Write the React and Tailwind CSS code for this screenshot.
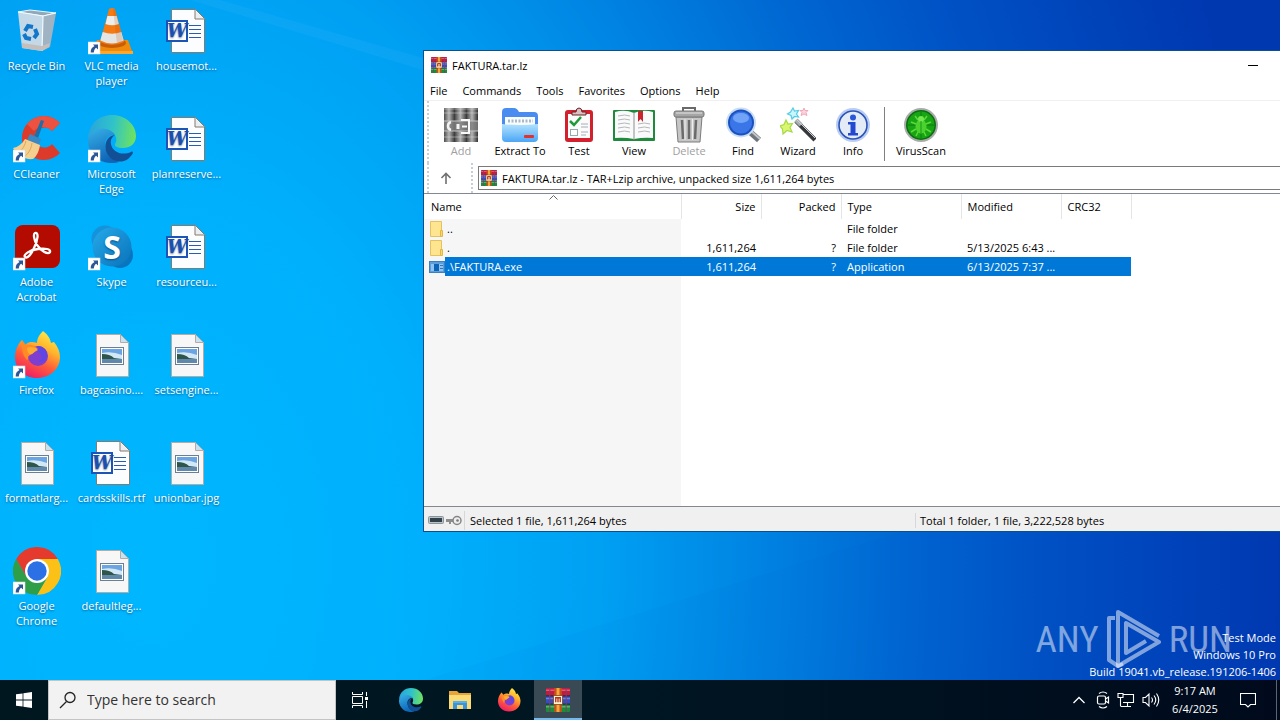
import { useState } from 'react'

/* ---------- desktop icons (48x48) ---------- */

function ShortcutArrow() {
  return (
    <g>
      <rect x="0" y="35" width="12" height="12" fill="#fff" stroke="#d5dbe2" strokeWidth="0.6" />
      <path d="M5 37.5h5v5l-1.8-1.7c-1.6 1-2.2 2.6-2.4 4.7H2.7c0-3 1-5 3.8-6.4z" fill="#2b5797" />
    </g>
  )
}

function RecycleBin() {
  return (
    <svg viewBox="0 0 48 48" className="size-12" aria-hidden="true">
      <path d="M5 5l12-2 26 3-13 3z" fill="#8fa9ba" stroke="#eef6fb" />
      <path d="M5 5l25 4-1 35-20-3z" fill="#c3d9e8" />
      <path d="M30 9l13-3-6 34-8 4z" fill="#9fb3c3" />
      <path d="M5 5l25 4 13-3M30 9l-1 35" fill="none" stroke="#f4fafd" strokeWidth="1.2" />
      <path d="M9 36l20 3 8-3-1 4-7 4-20-3z" fill="#c4bfbd" />
      <g fill="none" stroke="#1377c9" strokeWidth="4">
        <path d="M12 24l3-5 5 1" />
        <path d="M22 22l2 5-3 4" />
        <path d="M18 32l-5-1-2-4" />
      </g>
    </svg>
  )
}

function Vlc() {
  return (
    <svg viewBox="0 0 48 48" className="size-12" aria-hidden="true">
      <path d="M9 33h31l5 14H4z" fill="#f08a0c" />
      <path d="M4 44h41v3H4z" fill="#ffa62b" />
      <ellipse cx="24" cy="36" rx="14" ry="5" fill="#c95d05" />
      <path d="M21 2q3-2 6 0l9 33q-12 6-24 0z" fill="#f47b14" />
      <path d="M19.4 9h9.2l2.2 8q-6.500 2.500-13.300 0z" fill="#eceeed" />
      <path d="M14.700 25q9.500 3.500 18.600 0l2.400 8.500q-12 6-23.400 0z" fill="#e3e5e4" />
      <path d="M27 2l8 31-6 4-4-35z" fill="#b84a00" opacity=".18" />
      <ShortcutArrow />
    </svg>
  )
}

function CCleaner() {
  return (
    <svg viewBox="0 0 48 48" className="size-12" aria-hidden="true">
      <path d="M47 8A22 22 0 1 0 47 38l-8-9a10 10 0 1 1 0-13z" fill="#dc3b2b" />
      <path d="M47 8A22 22 0 0 0 14 9l7 7a12 12 0 0 1 18 0z" fill="#ed5240" />
      <path d="M28 5l3 1-7 20-4-2z" fill="#1d6fa5" />
      <path d="M17 19l11 5-2 6-12-5z" fill="#3a89c4" />
      <path d="M12 24l15 6c-1 6-3 11-7 14C12 45 4 40 0 33c5-1 9-4 12-9z" fill="#f5cf8f" />
      <path d="M13 26c-2 7-5 10-8 12M19 28c-1 7-4 11-8 14" stroke="#dba75b" fill="none" />
      <ShortcutArrow />
    </svg>
  )
}

function EdgeLogo({ id, className, children }) {
  return (
    <svg viewBox="0 0 48 48" className={className} aria-hidden="true">
      <defs>
        <linearGradient id={`${id}-top`} x1="0" y1=".4" x2="1" y2=".5">
          <stop offset="0" stopColor="#2aa4dc" />
          <stop offset=".5" stopColor="#2fc3c9" />
          <stop offset="1" stopColor="#6fe25e" />
        </linearGradient>
        <linearGradient id={`${id}-left`} x1="0" y1="0" x2=".4" y2="1">
          <stop offset="0" stopColor="#37b2e8" />
          <stop offset="1" stopColor="#0f66b8" />
        </linearGradient>
      </defs>
      <path d="M0 23C1 9 11 0 24 0c14 0 24 10 24 21 0 8-6 12-13 12-6 0-9-2-8-4 3-4 1-12-7-13C10 15 3 18 0 23z" fill={`url(#${id}-top)`} />
      <path d="M0 24c2-7 9-12 18-10 5 1 8 4 9 6-6-1-10 4-10 10 0 9 7 15 14 17C13 52-1 39 0 24z" fill={`url(#${id}-left)`} />
      <path d="M27 20c-8 1-11 9-9 16 3 9 13 14 22 8 2-2 4-4 5-6 0-1-1-2-2-1-9 4-19 0-20-8-1-4 1-7 4-9z" fill="#124f94" />
      {children}
    </svg>
  )
}

function Acrobat() {
  return (
    <svg viewBox="0 0 48 48" className="size-12" aria-hidden="true">
      <rect x="2" y="2" width="45" height="43" rx="8" fill="#b30b00" />
      <path d="M22 10c4-1 3 7-1 15-3 7-7 11-9 9s4-7 13-8c7-1 13 0 12 3-2 3-9-1-13-7-3-5-4-11-2-12z" fill="none" stroke="#fff" strokeWidth="2.300" />
      <ShortcutArrow />
    </svg>
  )
}

function Skype() {
  return (
    <svg viewBox="0 0 48 48" className="size-12" aria-hidden="true">
      <defs>
        <linearGradient id="sky" x1="0" y1="0" x2="1" y2="1">
          <stop offset="0" stopColor="#25aaea" />
          <stop offset="1" stopColor="#0a72bb" />
        </linearGradient>
      </defs>
      <circle cx="17" cy="16" r="13.500" fill="#1593da" />
      <circle cx="32" cy="32" r="13" fill="#0876bf" />
      <circle cx="24" cy="24" r="19.500" fill="url(#sky)" />
      <text x="24" y="36" textAnchor="middle" fontSize="32" fontWeight="700" fill="#fff" className="font-['Open_Sans',sans-serif]">S</text>
      <ShortcutArrow />
    </svg>
  )
}

function FirefoxLogo({ id, className, children }) {
  return (
    <svg viewBox="0 0 48 48" className={className} aria-hidden="true">
      <defs>
        <linearGradient id={`${id}-body`} x1=".8" y1="0" x2=".3" y2="1">
          <stop offset="0" stopColor="#fff04a" />
          <stop offset=".35" stopColor="#ffb32c" />
          <stop offset=".65" stopColor="#ff5b3a" />
          <stop offset="1" stopColor="#ee1c68" />
        </linearGradient>
      </defs>
      <path d="M30 0c5 4 7 7 8 12 2-1 3-1 3-1 4 5 6 10 6 15 0 12-10 21-23 21S2 38 2 26c0-7 3-13 7-17l3 5c2-2 4-3 6-3 2 0 4 0 6 1 0-5 3-9 6-12z" fill={`url(#${id}-body)`} />
      <circle cx="25" cy="25" r="10" fill="#7e3fd1" />
      <path d="M25 15c6 0 10 5 9 11-2 4-5 5-9 5 4-2 5-6 2-9-2-2-4-2-6-4z" fill="#5e46e4" />
      <path d="M9 9l4 5c4-1 9 0 12 4-3 0-4 2-5 4-2 2-5 2-5 5 0 2-1 2-1 2-3-3-6-8-5-20z" fill="#ff8a26" />
      <path d="M14 17c3-2 8-1 11 2-3 1-4 3-6 4-3 1-5-2-5-6z" fill="#ffab30" />
      {children}
    </svg>
  )
}

function ChromeLogo() {
  return (
    <svg viewBox="0 0 48 48" className="size-12" aria-hidden="true">
      <path d="M24 12h20.800A24 24 0 0 1 24 48l10.400-18z" fill="#fbc116" />
      <path d="M3.200 12l10.400 18 10.400 6 10.400-6L24 48A24 24 0 0 1 3.200 12z" fill="#2f9e49" />
      <path d="M3.200 12A24 24 0 0 1 44.800 12H24L13.600 30z" fill="#e53a2e" />
      <circle cx="24" cy="24" r="12" fill="#fff" />
      <circle cx="24" cy="24" r="9.700" fill="#2b70e4" />
      <ShortcutArrow />
    </svg>
  )
}

function WordDoc() {
  return (
    <svg viewBox="0 0 48 48" className="size-12" aria-hidden="true">
      <path d="M8.500 2.500h24l9 9v34h-33z" fill="#fcfdfe" stroke="#87796c" />
      <path d="M32 3v9h9" fill="#e9eef2" stroke="#87796c" />
      <path d="M26 18.500h12M26 22.500h12M26 26.500h12M26 30.500h12" stroke="#2a5caf" />
      <rect x="4" y="14" width="20" height="20" fill="#fff" stroke="#1c55b5" strokeWidth="2" />
      <text x="14" y="30" textAnchor="middle" fontSize="18" fontWeight="700" fontStyle="italic" fill="#1c4fae" className="font-['DejaVu_Serif',serif]">W</text>
    </svg>
  )
}

function ImageDoc() {
  return (
    <svg viewBox="0 0 48 48" className="size-12" aria-hidden="true">
      <path d="M8.500 3.500h24l8 8v34h-32z" fill="#f7f7f7" stroke="#b4aca4" />
      <path d="M32.500 3.500v8h8z" fill="#c8e2f1" stroke="#b4aca4" />
      <rect x="12.500" y="16.500" width="23" height="17" fill="#fff" stroke="#6a7f90" />
      <rect x="14" y="18" width="20" height="14" fill="#6ba4e2" />
      <path d="M14 22q10-2 20 2v4H14z" fill="#d2e8f6" />
      <path d="M14 23q8 0 12 4l8 1v1H14z" fill="#2f5548" />
      <path d="M14 28h20v4H14z" fill="#5f88ac" />
    </svg>
  )
}

/* ---------- archiver icons ---------- */

function RarLogo({ className }) {
  return (
    <svg viewBox="0 0 32 32" className={className} aria-hidden="true">
      <rect x="0" y="0" width="32" height="10" rx="1" fill="#c41a3c" />
      <rect x="0" y="11" width="32" height="10" rx="1" fill="#2f4fc8" />
      <rect x="0" y="22" width="32" height="10" rx="1" fill="#159038" />
      <path d="M0 3h32M0 14h32M0 25h32" stroke="#fff" strokeOpacity=".3" strokeWidth="2" />
      <path d="M0 10.500h32M0 21.500h32" stroke="#2a1a2c" />
      <path d="M5 0v32M27 0v32" stroke="#8a3b6a" strokeOpacity=".7" strokeWidth="2" />
      <rect x="11" y="0" width="10" height="32" fill="#c9501b" />
      <path d="M16 0v32" stroke="#f2a93a" strokeWidth="4" />
      <rect x="10" y="10" width="12" height="12" fill="#fff3cf" stroke="#7b3a16" />
      <path d="M13 19v-6h6v6M16 12v7" stroke="#b3301c" strokeWidth="1.800" fill="none" />
    </svg>
  )
}

function AddIcon() {
  return (
    <svg viewBox="0 0 36 36" className="size-9" aria-hidden="true">
      <defs>
        <linearGradient id="tube">
          <stop offset="0" stopColor="#4c4c4c" />
          <stop offset=".45" stopColor="#b4b4b4" />
          <stop offset="1" stopColor="#333" />
        </linearGradient>
      </defs>
      <rect x="1" y="1" width="11" height="34" fill="url(#tube)" />
      <rect x="12" y="1" width="12" height="34" fill="url(#tube)" />
      <rect x="24" y="1" width="11" height="34" fill="url(#tube)" />
      <path d="M1 2h34M1 6h34M1 30h34" stroke="#dcdcdc" strokeOpacity=".5" />
      <rect x="1" y="14" width="34" height="10" fill="#808080" fillOpacity=".8" />
      <path d="M1 14h34M1 24h34" stroke="#c4c4c4" />
      <path d="M8 15c-4 1-4 7 0 8" stroke="#f2f2f2" strokeWidth="2.500" fill="none" />
      <path d="M15 17v5" stroke="#f4f4f4" strokeWidth="3" />
      <path d="M18 13h8v13h-8M19 19.500h5" stroke="#fafafa" strokeWidth="2" fill="none" />
    </svg>
  )
}

function ExtractIcon() {
  return (
    <svg viewBox="0 0 36 36" className="size-9" aria-hidden="true">
      <defs>
        <linearGradient id="fold" x1="0" y1="0" x2="0" y2="1">
          <stop offset="0" stopColor="#b3e3ff" />
          <stop offset="1" stopColor="#4ba6f6" />
        </linearGradient>
      </defs>
      <path d="M0 5q0-4 4-4h8q3 0 5 4h15q4 0 4 4v18H0z" fill="#4a8cf0" />
      <path d="M3 10h30v12H3z" fill="#fafdff" />
      <path d="M6 14h25" stroke="#a9b8c8" strokeWidth="3" strokeDasharray="2 1.500" />
      <path d="M0 17q18 2 36 0v14q0 4-4 4H4q-4 0-4-4z" fill="url(#fold)" />
      <rect x="22" y="28" width="10" height="3" rx="1" fill="#e1322e" />
    </svg>
  )
}

function TestIcon() {
  return (
    <svg viewBox="0 0 36 36" className="size-9" aria-hidden="true">
      <rect x="4" y="3" width="28" height="32" rx="3" fill="#d4202c" />
      <path d="M7 7h22v24H7z" fill="#fbfbfb" />
      <path d="M11 8V5h4q0-4 3-4t3 4h4v3z" fill="#d9c0c2" stroke="#6a2228" />
      <path d="M9 14l4 4 7-8" fill="none" stroke="#1e9a3a" strokeWidth="2.500" />
      <rect x="9.500" y="22.500" width="7" height="6" fill="#fff" stroke="#9aa" />
      <path d="M20 17h7M20 20h7M20 25h7M20 28h5" stroke="#a8adb3" />
    </svg>
  )
}

function ViewIcon() {
  return (
    <svg viewBox="0 0 44 36" className="h-9 w-11" aria-hidden="true">
      <rect x="1" y="3" width="42" height="31" rx="1" fill="#1f8a3b" />
      <path d="M3 5q10-3 19 1v26q-10-2-19-1zM41 5q-10-3-19 1v26q10-2 19-1z" fill="#fafafa" />
      <path d="M6 9q7-2 12 0M6 13q7-2 12 0M6 17q7-2 12 0M6 21q7-2 12 0M6 25q7-2 12 0M26 17q7-2 12 0M26 21q7-2 12 0M26 25q7-2 12 0" stroke="#b4b8bb" fill="none" />
      <path d="M22 5v28" stroke="#8a8f90" />
      <path d="M26 4h5v11l-2.500-3-2.500 3z" fill="#c8252e" />
    </svg>
  )
}

function DeleteIcon() {
  return (
    <svg viewBox="0 0 36 36" className="size-9" aria-hidden="true">
      <path d="M12 5V1h12v4" fill="none" stroke="#6a6a6a" strokeWidth="2" />
      <path d="M5 10h26l-2 25H7z" fill="#c6c6c6" stroke="#7c7c7c" />
      <path d="M11 13l1 19M18 13v19M25 13l-1 19" stroke="#6b6b6b" strokeWidth="2.500" />
      <path d="M14 12v21M21.500 12v21" stroke="#eee" />
      <rect x="3" y="4" width="30" height="6" rx="2" fill="#a6a6a6" stroke="#767676" />
      <path d="M5 6h26" stroke="#e4e4e4" />
    </svg>
  )
}

function FindIcon() {
  return (
    <svg viewBox="0 0 38 36" className="h-9 w-[38px]" aria-hidden="true">
      <path d="M26 25l9 8" stroke="#6f757b" strokeWidth="6" />
      <path d="M27 24l9 8" stroke="#c2c6ca" strokeWidth="2" />
      <circle cx="17" cy="15.500" r="15" fill="#c8def4" />
      <circle cx="17" cy="15.500" r="13" fill="#1b50c0" />
      <circle cx="17" cy="15.500" r="11" fill="#3a76e8" />
      <ellipse cx="17" cy="11" rx="8" ry="5" fill="#7fb0fa" opacity=".8" />
    </svg>
  )
}

function WizardIcon() {
  return (
    <svg viewBox="0 0 36 36" className="size-9" aria-hidden="true">
      <path d="M16 14l19 19" stroke="#35383c" strokeWidth="4.500" />
      <path d="M16 13l5 5" stroke="#a8adb2" strokeWidth="4.500" />
      <path d="M17 13l18 18" stroke="#d0d0d0" strokeWidth="1" />
      <path d="M13 1l1.500 3 4-.5-2 3.500 2 3-4-.5L12 12l-1-3.500L7.500 7l3-2z" fill="#c9f5fb" stroke="#53cde4" strokeWidth="1.200" />
      <path d="M24 1l1 2.500h3L26 5.500l1 3-3-1.500-3 1.500 1-3-2-2h3z" fill="#fbd4dd" stroke="#f0a9b9" />
      <path d="M6 13l2 4 4.500-.5-2.500 4 2 4.500-5-1.500L3 27l-.5-5L0 19l4-1.500z" fill="#dcf56e" stroke="#a5da4b" strokeWidth="1.200" />
    </svg>
  )
}

function InfoIcon() {
  return (
    <svg viewBox="0 0 36 36" className="size-9" aria-hidden="true">
      <circle cx="18" cy="18" r="17" fill="#b9cdf3" />
      <circle cx="18" cy="18" r="14" fill="#e3ebf6" stroke="#2c52b8" strokeWidth="1.600" />
      <circle cx="18" cy="10.500" r="3" fill="#2a55dc" />
      <path d="M13 15h7.500v11H23v2.500H13V26h2.500v-8.500H13z" fill="#2348cf" />
    </svg>
  )
}

function VirusIcon() {
  return (
    <svg viewBox="0 0 36 36" className="size-9" aria-hidden="true">
      <circle cx="18" cy="18" r="17" fill="#a8aca8" />
      <circle cx="18" cy="18" r="15" fill="#0b6d12" />
      <circle cx="18" cy="18" r="13.500" fill="#18a514" />
      <path d="M18 5v26M5 18h26" stroke="#0d7d10" />
      <path d="M12 9l3 4M24 9l-3 4M8 15l5 2M28 15l-5 2M8 25l5-3M28 25l-5-3M13 29l2-4M23 29l-2-4" stroke="#5ed83a" strokeWidth="1.500" />
      <ellipse cx="18" cy="19.500" rx="5.500" ry="7" fill="#4cd22e" />
      <circle cx="18" cy="12" r="3" fill="#74e64f" />
      <path d="M18 14v12" stroke="#1b9618" />
    </svg>
  )
}

/* ---------- data ---------- */

const desktopColumns = [
  [
    { label: 'Recycle Bin', icon: <RecycleBin /> },
    { label: 'CCleaner', icon: <CCleaner /> },
    { label: 'Adobe Acrobat', icon: <Acrobat /> },
    { label: 'Firefox', icon: <FirefoxLogo id="ffd" className="size-12"><ShortcutArrow /></FirefoxLogo> },
    { label: 'formatlarg...', icon: <ImageDoc /> },
    { label: 'Google Chrome', icon: <ChromeLogo /> },
  ],
  [
    { label: 'VLC media player', icon: <Vlc /> },
    { label: 'Microsoft Edge', icon: <EdgeLogo id="edd" className="size-12"><ShortcutArrow /></EdgeLogo> },
    { label: 'Skype', icon: <Skype /> },
    { label: 'bagcasino....', icon: <ImageDoc /> },
    { label: 'cardsskills.rtf', icon: <WordDoc /> },
    { label: 'defaultleg...', icon: <ImageDoc /> },
  ],
  [
    { label: 'housemot...', icon: <WordDoc /> },
    { label: 'planreserve...', icon: <WordDoc /> },
    { label: 'resourceu...', icon: <WordDoc /> },
    { label: 'setsengine...', icon: <ImageDoc /> },
    { label: 'unionbar.jpg', icon: <ImageDoc /> },
  ],
]

const menus = ['File', 'Commands', 'Tools', 'Favorites', 'Options', 'Help']

const tools = [
  { label: 'Add', icon: AddIcon, width: 'w-[54px]', disabled: true },
  { label: 'Extract To', icon: ExtractIcon, width: 'w-16' },
  { label: 'Test', icon: TestIcon, width: 'w-[54px]' },
  { label: 'View', icon: ViewIcon, width: 'w-14' },
  { label: 'Delete', icon: DeleteIcon, width: 'w-[54px]', disabled: true },
  { label: 'Find', icon: FindIcon, width: 'w-[54px]' },
  { label: 'Wizard', icon: WizardIcon, width: 'w-14' },
  { label: 'Info', icon: InfoIcon, width: 'w-[54px]' },
]

const files = [
  { name: '..', size: '', packed: '', type: 'File folder', modified: '' },
  { name: '.', size: '1,611,264', packed: '?', type: 'File folder', modified: '5/13/2025 6:43 ...' },
  { name: '.\\FAKTURA.exe', size: '1,611,264', packed: '?', type: 'Application', modified: '6/13/2025 7:37 ...', app: true },
]

/* ---------- parts ---------- */

function DesktopIcons() {
  return (
    <div className="flex">
      {desktopColumns.map((items, i) => (
        <div key={i} className="flex w-[75px] flex-col pr-0.5">
          {items.map(({ label, icon }) => (
            <button key={label} className="flex h-[108px] flex-col items-center gap-[3px] pt-[7px] text-[11px] leading-[15px] text-white [text-shadow:0_1px_2px_rgba(0,40,90,0.6)]">
              {icon}
              <span className="max-w-[72px] text-center">{label}</span>
            </button>
          ))}
        </div>
      ))}
    </div>
  )
}

function ToolButton({ label, icon: Icon, width, disabled }) {
  return (
    <button disabled={disabled} className={`flex flex-col items-center ${width} ${disabled ? 'text-[#a0a0a0]' : 'text-black'}`}>
      <Icon />
      <span className="whitespace-nowrap">{label}</span>
    </button>
  )
}

function FileIcon({ app }) {
  if (app) {
    return (
      <svg viewBox="0 0 16 16" className="size-4 shrink-0" aria-hidden="true">
        <rect x="0.500" y="2.500" width="15" height="11" fill="#5a9edc" stroke="#3c7fc0" />
        <rect x="2" y="5" width="12" height="7" fill="#8fc4ee" />
        <rect x="5" y="5" width="5" height="7" fill="#0b64b8" />
        <path d="M11 6.500h3M11 9.500h3" stroke="#2f75b5" />
      </svg>
    )
  }
  return (
    <svg viewBox="0 0 16 16" className="size-4 shrink-0" aria-hidden="true">
      <path d="M1.500.5h11v15h-11z" fill="#ffe58f" stroke="#e5c25e" />
      <path d="M11.500 9.500h2v6h-2z" fill="#fbd667" stroke="#dfb849" />
    </svg>
  )
}

function FileList() {
  const [selected, setSelected] = useState('.\\FAKTURA.exe')

  return (
    <div className="flex-1 border-y border-[#828790] bg-[linear-gradient(to_right,#f6f6f6_257px,#fff_257px)]">
      <div className="bg-white">
        <table className="w-[707px] table-fixed border-collapse text-left">
          <thead>
            <tr className="h-[25px] bg-white">
              <th className="relative w-[257px] border-r border-[#e5e5e5] px-[7px] font-normal">
                Name
                <svg viewBox="0 0 9 5" className="absolute left-[125px] top-px h-[5px] w-[9px]" aria-hidden="true">
                  <path d="M.5 4.500l4-4 4 4" fill="none" stroke="#666" />
                </svg>
              </th>
              <th className="w-20 border-r border-[#e5e5e5] px-[5px] text-right font-normal">Size</th>
              <th className="w-20 border-r border-[#e5e5e5] px-[5px] text-right font-normal">Packed</th>
              <th className="w-[120px] border-r border-[#e5e5e5] px-1.5 font-normal">Type</th>
              <th className="w-[100px] border-r border-[#e5e5e5] px-1.5 font-normal">Modified</th>
              <th className="w-[70px] border-r border-[#e5e5e5] px-1.5 font-normal">CRC32</th>
            </tr>
          </thead>
          <tbody>
            {files.map((file) => {
              const active = file.name === selected
              return (
                <tr
                  key={file.name}
                  onClick={() => setSelected(file.name)}
                  className={`h-[19px] whitespace-nowrap leading-[15px] ${active ? 'bg-[#0078d7] text-white' : 'text-black'}`}
                >
                  <td className="bg-[#f6f6f6] p-0">
                    <div className="flex h-[19px] items-center pl-[5px]">
                      <FileIcon app={file.app} />
                      <span className={`flex h-full flex-1 items-center pl-0.5 ${active ? 'bg-[#0078d7]' : ''}`}>{file.name}</span>
                    </div>
                  </td>
                  <td className="px-[5px] py-0 text-right">{file.size}</td>
                  <td className="px-[5px] py-0 text-right">{file.packed}</td>
                  <td className="px-1.5 py-0">{file.type}</td>
                  <td className="px-1.5 py-0">{file.modified}</td>
                  <td />
                </tr>
              )
            })}
          </tbody>
        </table>
      </div>
    </div>
  )
}

function ArchiveWindow() {
  return (
    <section className="absolute left-[423px] right-0 top-[50px] flex h-[482px] flex-col border border-r-0 border-[#0b4f8c] bg-white text-[11px] leading-[15px] text-black">
      <header className="flex h-7 items-center pl-[7px]">
        <RarLogo className="size-4" />
        <h1 className="flex-1 pl-[5px]">FAKTURA.tar.lz</h1>
        <button aria-label="Minimize" className="mr-1 flex h-7 w-[46px] items-center justify-center">
          <span className="h-px w-2.5 bg-black" />
        </button>
      </header>

      <nav className="flex h-[22px] items-center gap-[15px] border-b border-[#f0f0f0] pl-1.5 pt-0.5">
        {menus.map((menu) => (
          <button key={menu}>{menu}</button>
        ))}
      </nav>

      <div className="flex h-[62px] items-start pl-[3px]">
        <div className="h-full border-l-2 border-dotted border-[#c3cfdb]" />
        <div className="flex pl-[5px] pt-1.5">
          {tools.map((tool) => (
            <ToolButton key={tool.label} {...tool} />
          ))}
          <div className="ml-1 mr-2 h-[54px] border-l border-[#808080]" />
          <ToolButton label="VirusScan" icon={VirusIcon} width="w-14" />
        </div>
      </div>

      <div className="flex h-[30px] items-center pl-[3px]">
        <div className="h-full border-l-2 border-dotted border-[#c3cfdb]" />
        <button aria-label="Up one level" className="flex w-[42px] justify-center pr-2">
          <svg viewBox="0 0 12 12" className="size-3" aria-hidden="true">
            <path d="M6 12V1.500M1.500 6L6 1.500 10.500 6" fill="none" stroke="#707070" strokeWidth="1.600" />
          </svg>
        </button>
        <div className="h-full border-l-2 border-dotted border-[#c3cfdb]" />
        <div className="ml-[5px] flex h-6 flex-1 items-center border border-r-0 border-[#7a7a7a] pl-0.5">
          <RarLogo className="size-4" />
          <input
            aria-label="Archive path"
            defaultValue="FAKTURA.tar.lz - TAR+Lzip archive, unpacked size 1,611,264 bytes"
            className="min-w-0 flex-1 pl-[5px] outline-none"
          />
        </div>
      </div>

      <FileList />

      <footer className="flex h-6 items-center bg-[#f0f0f0] pt-0.5">
        <div className="flex w-[41px] items-center gap-0.5 border-r border-[#d7d7d7] py-1 pl-1">
          <svg viewBox="0 0 16 8" className="h-2 w-4" aria-hidden="true">
            <rect x=".5" y=".5" width="15" height="7" rx="1" fill="#bac3c8" stroke="#8a969c" />
            <rect x="2" y="2" width="12" height="4" fill="#32414a" />
          </svg>
          <svg viewBox="0 0 16 11" className="h-[11px] w-4" aria-hidden="true">
            <path d="M0 4h8v3H5v2H3V7H0z" fill="#8d8d8d" />
            <circle cx="11" cy="5.500" r="4" fill="#eee" stroke="#858585" strokeWidth="1.500" />
            <circle cx="11.500" cy="5.500" r="1.300" fill="#777" />
          </svg>
        </div>
        <p className="w-[451px] border-r border-[#d7d7d7] pl-[5px]">Selected 1 file, 1,611,264 bytes</p>
        <p className="pl-1">Total 1 folder, 1 file, 3,222,528 bytes</p>
      </footer>
    </section>
  )
}

function Watermark() {
  return (
    <div className="absolute bottom-[11px] right-12 flex items-center gap-2 font-['Roboto_Condensed','Liberation_Sans_Narrow','DejaVu_Sans_Condensed',sans-serif] text-[37px] leading-none text-white/50">
      <span>ANY</span>
      <svg viewBox="0 0 54 60" className="h-[60px] w-[54px]" aria-hidden="true">
        <g fill="none" stroke="#fff" strokeOpacity=".5" strokeWidth="4" strokeLinejoin="round">
          <path d="M8 9H2v42l9 6 5-2" />
          <path d="M11 44V3l41 24M11 44V57l41-24-33-19v30l20-12" />
        </g>
      </svg>
      <span>RUN</span>
    </div>
  )
}

function Taskbar() {
  return (
    <footer className="flex h-10 bg-[linear-gradient(to_right,#00171f,#001622_50%,#000a1c)] text-white">
      <button aria-label="Start" className="flex w-12 items-center justify-center">
        <svg viewBox="0 0 16 16" className="size-4" fill="#fff" aria-hidden="true">
          <path d="M0 2.300l6.600-.9v6.200H0zM7.400 1.300L16 0v7.600H7.400zM0 8.400h6.600v6.200L0 13.700zM7.400 8.400H16V16l-8.600-1.200z" />
        </svg>
      </button>

      <label className="flex w-72 items-center gap-2.5 border border-[#c4c4c4] bg-[#f2f2f2] pl-2.5">
        <svg viewBox="0 0 18 18" className="size-[18px]" aria-hidden="true">
          <circle cx="11" cy="6.500" r="5" fill="none" stroke="#222" strokeWidth="1.300" />
          <path d="M7.500 10.500L1 17" stroke="#222" strokeWidth="1.300" />
        </svg>
        <input type="text" aria-label="Search" placeholder="Type here to search" className="min-w-0 flex-1 text-sm text-black outline-none placeholder:text-[#333]" />
      </label>

      <button aria-label="Task View" className="mr-[3px] flex w-12 items-center justify-center">
        <svg viewBox="0 0 17 16" className="h-4 w-[17px]" fill="none" stroke="#fff" aria-hidden="true">
          <path d="M.5 0v2.500h10V0M.5 16v-2.500h10V16M.5 4.500h10v7H.5zM14.500 0v4M14.500 9v7" />
          <rect x="13" y="5" width="3" height="3" fill="#fff" stroke="none" />
        </svg>
      </button>
      <div className="flex gap-px">
        <button aria-label="Microsoft Edge" className="flex w-12 items-center justify-center">
          <EdgeLogo id="edt" className="size-6" />
        </button>
        <button aria-label="File Explorer" className="flex w-12 items-center justify-center">
          <svg viewBox="0 0 24 24" className="size-6" aria-hidden="true">
            <path d="M1 3h8l2 2h12v5H1z" fill="#e8a33a" />
            <path d="M1 7h22v14H1z" fill="#fcdb75" />
            <path d="M5 13h14v8h-4v-4H9v4H5z" fill="#3b94d9" />
            <path d="M5 13h14v2H5z" fill="#56b0ec" />
          </svg>
        </button>
        <button aria-label="Firefox" className="flex w-12 items-center justify-center">
          <FirefoxLogo id="fft" className="size-6" />
        </button>
        <button aria-label="WinRAR" className="flex w-12 items-center justify-center border-b-2 border-[#76b9ed] bg-[#3a4a54] pt-0.5">
          <RarLogo className="size-6" />
        </button>
      </div>

      <div className="ml-auto flex items-center">
        <div className="flex items-center gap-[7px]">
          <svg viewBox="0 0 12 8" className="mr-1 h-2 w-3" aria-hidden="true">
            <path d="M.5 7L6 1.500 11.500 7" fill="none" stroke="#fff" strokeWidth="1.300" />
          </svg>
          <svg viewBox="0 0 14 18" className="h-[18px] w-3.5" fill="none" stroke="#fff" strokeWidth="1.200" aria-hidden="true">
            <path d="M3 2.500q4-3 8 0M3 15.500q4 3 8 0" />
            <rect x="1.500" y="5" width="8" height="8" rx="1.500" />
            <path d="M9.500 8l3-2v6l-3-2" />
          </svg>
          <svg viewBox="0 0 18 16" className="h-4 w-[18px]" fill="none" stroke="#fff" strokeWidth="1.100" aria-hidden="true">
            <path d="M6 2.500h10.500v8H6M10.500 10.500v4M7 14.500h7M3.500 6v8M3.500 14.500H7" />
            <path d="M1 1.500h5v4H1z" />
          </svg>
          <svg viewBox="0 0 18 16" className="h-4 w-[18px]" fill="none" stroke="#fff" strokeWidth="1.100" aria-hidden="true">
            <path d="M1 5.500h2.500L7 2v12l-3.500-3.500H1zM9.500 5.500q2 2.500 0 5M12 3.500q3.500 4.500 0 9M14.500 1.500q4.500 6.500 0 13" />
          </svg>
        </div>
        <time className="w-[70px] text-center text-[11px] leading-[18px]">
          9:17 AM
          <br />
          6/4/2025
        </time>
        <button aria-label="Notifications" className="flex h-10 w-9 items-center justify-center">
          <svg viewBox="0 0 16 16" className="size-4" aria-hidden="true">
            <path d="M.5 1.500h15v11h-5L8 15l-2.500-2.500h-5z" fill="none" stroke="#fff" strokeWidth="1.100" />
          </svg>
        </button>
        <div className="ml-2.5 mr-[3px] h-10 border-l border-[#5b6470]" />
      </div>
    </footer>
  )
}

export default function App() {
  return (
    <div className="flex h-screen flex-col overflow-hidden font-['Open_Sans','Noto_Sans',sans-serif]">
      <main className="relative flex-1 overflow-hidden bg-[radial-gradient(ellipse_1100px_1500px_at_150px_560px,#00b7ff_0%,#00b0fc_25%,#00a0f3_41%,#0086e4_54%,#0068d2_68%,#0050c4_82%,#0038b0_103%)]">
        <svg viewBox="0 0 1280 680" preserveAspectRatio="none" className="absolute inset-0 h-full w-full" aria-hidden="true">
          <path d="M190 0L430 72V60L220 0z" fill="#fff" opacity=".04" />
          <path d="M425 680L900 532H1280V680z" fill="#0038c0" opacity=".03" />
        </svg>
        <div className="relative">
          <DesktopIcons />
        </div>
        <ArchiveWindow />
        <Watermark />
        <div className="absolute bottom-0 right-1 text-right text-[11px] leading-[17px] text-white">
          <p>Test Mode</p>
          <p>Windows 10 Pro</p>
          <p>Build 19041.vb_release.191206-1406</p>
        </div>
      </main>
      <Taskbar />
    </div>
  )
}
